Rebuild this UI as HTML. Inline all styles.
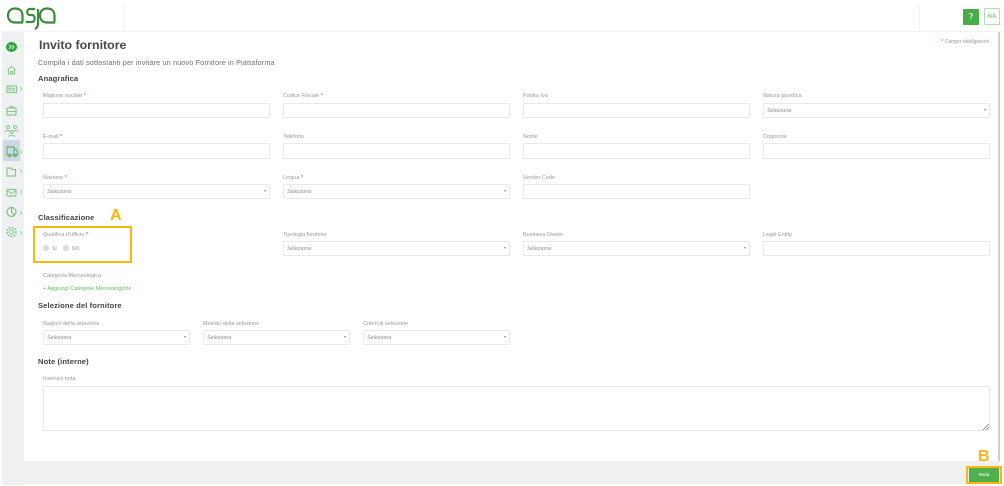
<!DOCTYPE html>
<html lang="it"><head><meta charset="utf-8"><title>Invito fornitore</title>
<style>
html,body{margin:0;padding:0;background:#fff}
#p{position:relative;width:1004px;height:486px;overflow:hidden;background:#fff;font-family:"Liberation Sans",sans-serif;color:#777}
#p>*{position:absolute}
.l{font-size:5.5px;line-height:8px;color:#999;white-space:nowrap;filter:blur(.3px);margin-top:1px}
.l b{color:#e8344e;font-weight:400}
.i{box-sizing:border-box;border:1px solid #e8eaea;background:#fff;border-radius:1px;height:15px}
.s{box-sizing:border-box;border:1px solid #e8eaea;background:#fff;border-radius:1px;height:15px;font-size:5.5px;font-style:italic;color:#8f8f8f;line-height:15px;padding-left:3px}
.s:after{content:"";position:absolute;right:3px;top:5px;border:1.5px solid transparent;border-top:2px solid #888;border-bottom:0}
.h{font-size:7.600px;font-weight:700;color:#444;line-height:10px;white-space:nowrap;letter-spacing:.1px;filter:blur(.25px);margin-top:1px}
.o{border:2px solid #fbb70f;box-sizing:border-box}
.y{color:#fbb70f;font-weight:700;font-size:16px;line-height:16px}
svg{overflow:visible}
</style></head><body><div id="p">
<svg style="left:0;top:0" width="60" height="32" viewBox="0 0 60 32" fill="none" stroke="#3b8b3a" stroke-width="2.200">
<path d="M23 22.500H15C10.500 22.500 8 19.500 8 15.500S10.500 8.500 15 8.500C19.500 8.500 22.500 11 22.500 15.500V22"/>
<path d="M35 9H29.500C26.500 9 26.500 15 29.500 15H32C35.500 15 35.500 22 32 22H26"/>
<path d="M38 9V23.500C38 26.500 37 28 35 29"/>
<path d="M55 22.500H47C42.500 22.500 40 19.500 40 15.500S42.500 8.500 47 8.500C51.500 8.500 54.500 11 54.500 15.500V22"/>
</svg>
<div style="left:123px;top:5px;width:1px;height:26px;background:#f4f4f4"></div>
<div style="left:919px;top:5px;width:1px;height:26px;background:#f4f4f4"></div>
<div style="left:0;top:31px;width:1004px;height:1px;background:#f2f2f2"></div>
<div style="left:963px;top:9px;width:16px;height:16px;background:#47ad45;border-radius:1px;color:#dff3df;font-size:8px;font-weight:700;line-height:16px;text-align:center">?</div>
<div style="left:984px;top:8px;box-sizing:border-box;width:16px;height:17px;border:1px solid #b3e0b3;border-radius:1px;color:#8fcb8f;font-size:6px;font-weight:700;line-height:17px;text-align:center">NA</div>

<div style="left:2px;top:32px;width:22px;height:453px;background:#edf1f2"></div>
<div style="left:3px;top:140px;width:17px;height:21px;background:#ccd9e4;border-radius:2px"></div>
<svg style="left:0;top:32px" width="26" height="215" viewBox="0 0 26 215" fill="none" stroke="#8cc88c" stroke-width="1">
<ellipse cx="11.500" cy="15" rx="5.500" ry="5" fill="#2fa53a" stroke="none"/>
<path d="M9 13l2 2-2 2M12 13l2 2-2 2" stroke="#dff3df"/>
<path d="M7.500 38l4-3.500 4 3.500M8.500 37v5h6v-5M10.500 42v-2.500h2V42"/>
<rect x="7" y="54" width="9.500" height="6.500" stroke-width="1.200"/><path d="M9 56h2v2H9zM12.500 56.500h2.500M12.500 58.500h2.500"/>
<rect x="7" y="76" width="9" height="7" rx="1" stroke-width="1.200"/><path d="M7 79.500h9M10 76v-1.500h3V76"/>
<circle cx="8" cy="95" r="1.500"/><circle cx="15" cy="95" r="1.500"/><circle cx="11.500" cy="100" r="1.500"/><path d="M5.500 100c0-2 4-2 4 0M13.500 100c0-2 4-2 4 0M8.500 105c0-2.500 6-2.500 6 0"/>
<path d="M7 115h7v8H7zM14 117.500h2.500l1 2.500v3H14" stroke="#6db56d" stroke-width="1.200"/><circle cx="9.500" cy="123.500" r="1.200" stroke="#6db56d"/><circle cx="15" cy="123.500" r="1.200" stroke="#6db56d"/>
<path d="M7 136h4l1 1.500h3.500v6.500H7z" stroke-width="1.200"/>
<rect x="7" y="157.500" width="9" height="6.500" rx="1" stroke-width="1.200"/><path d="M7 158.500l4.500 3 4.500-3"/>
<circle cx="11.500" cy="180" r="4.500" stroke-width="1.400"/><path d="M11.500 175.500V180l3 3" stroke="#6db56d"/>
<circle cx="11.500" cy="200" r="2"/><circle cx="11.500" cy="200" r="4.500" stroke-width="1.500" stroke-dasharray="2 1"/>
<g stroke="#b5bcbc" stroke-width=".8"><path d="M20 55l2 2-2 2M20 118l2 2-2 2M20 137l2 2-2 2M20 158l2 2-2 2M20 179l2 2-2 2M20 199l2 2-2 2"/></g>
</svg>

<div style="left:39px;top:38px;font-size:12.400px;line-height:15px;font-weight:700;color:#4a4a4a;white-space:nowrap;filter:blur(.3px)">Invito fornitore</div>
<div style="left:38px;top:58px;font-size:7.300px;line-height:9px;color:#707070;white-space:nowrap;letter-spacing:.12px;filter:blur(.25px)">Compila i dati sottostanti per invitare un nuovo Fornitore in Piattaforma</div>
<div class="l" style="left:941px;top:37px;font-size:5.200px;font-style:italic"><b>*</b> Campo obbligatorio</div>

<div class="h" style="left:38px;top:73px">Anagrafica</div>
<div class="l" style="left:43px;top:91px">Ragione sociale <b>*</b></div><div class="i" style="left:43px;top:103px;width:227px"></div>
<div class="l" style="left:283px;top:91px">Codice Fiscale <b>*</b></div><div class="i" style="left:283px;top:103px;width:227px"></div>
<div class="l" style="left:523px;top:91px">Partita Iva</div><div class="i" style="left:523px;top:103px;width:227px"></div>
<div class="l" style="left:763px;top:91px">Natura giuridica</div><div class="s" style="left:763px;top:103px;width:227px">Seleziona</div>

<div class="l" style="left:43px;top:132px">E-mail <b>*</b></div><div class="i" style="left:43px;top:143px;width:227px;height:16px"></div>
<div class="l" style="left:283px;top:132px">Telefono</div><div class="i" style="left:283px;top:143px;width:227px;height:16px"></div>
<div class="l" style="left:523px;top:132px">Nome</div><div class="i" style="left:523px;top:143px;width:227px;height:16px"></div>
<div class="l" style="left:763px;top:132px">Cognome</div><div class="i" style="left:763px;top:143px;width:227px;height:16px"></div>

<div class="l" style="left:43px;top:173px">Nazione <b>*</b></div><div class="s" style="left:43px;top:184px;width:227px">Seleziona</div>
<div class="l" style="left:283px;top:173px">Lingua <b>*</b></div><div class="s" style="left:283px;top:184px;width:227px">Seleziona</div>
<div class="l" style="left:523px;top:173px">Vendor Code</div><div class="i" style="left:523px;top:184px;width:227px"></div>

<div class="h" style="left:38px;top:212px">Classificazione</div>
<div class="y" style="left:110px;top:208px">A</div>
<div class="o" style="left:33px;top:226px;width:99px;height:37px"></div>
<div class="l" style="left:43px;top:230px">Qualifica d'ufficio <b>*</b></div>
<div style="left:43px;top:245px;width:6px;height:6px;border-radius:50%;background:#dcdcdc"></div>
<div class="l" style="left:52px;top:244px;font-size:5px">SI</div>
<div style="left:63px;top:245px;width:6px;height:6px;border-radius:50%;background:#dcdcdc"></div>
<div class="l" style="left:72px;top:244px;font-size:5px">NO</div>
<div class="l" style="left:283px;top:230px">Tipologia fornitore</div><div class="s" style="left:283px;top:241px;width:227px">Seleziona</div>
<div class="l" style="left:523px;top:230px">Business Owner</div><div class="s" style="left:523px;top:241px;width:227px">Seleziona</div>
<div class="l" style="left:763px;top:230px">Legal Entity</div><div class="i" style="left:763px;top:241px;width:227px"></div>

<div class="l" style="left:43px;top:271px">Categoria Merceologica</div>
<div class="l" style="left:43px;top:284px;color:#62bd62;font-size:5.500px">+ Aggiungi Categorie Merceologiche</div>

<div class="h" style="left:38px;top:300px">Selezione del fornitore</div>
<div class="l" style="left:43px;top:319px">Ragioni della selezione</div><div class="s" style="left:43px;top:330px;width:147px">Seleziona</div>
<div class="l" style="left:203px;top:319px">Metodo della selezione</div><div class="s" style="left:203px;top:330px;width:147px">Seleziona</div>
<div class="l" style="left:363px;top:319px">Criteri di selezione</div><div class="s" style="left:363px;top:330px;width:147px">Seleziona</div>

<div class="h" style="left:38px;top:356px">Note (interne)</div>
<div class="l" style="left:43px;top:374px">Inserisci nota</div>
<div class="i" style="left:43px;top:386px;width:947px;height:45px"></div>
<svg style="left:983px;top:424px" width="6" height="6" viewBox="0 0 6 6" stroke="#666" stroke-width=".7"><path d="M0 6L6 0M3 6L6 3"/></svg>

<div style="left:998px;top:32px;width:2px;height:429px;background:#cfcfcf"></div>
<div style="left:24px;top:461px;width:976px;height:23px;background:#f0f0f0"></div>
<div style="left:969px;top:468px;width:30px;height:14px;background:#4fb04d;color:#e3f4e3;font-size:4.800px;font-weight:700;line-height:16px;text-align:center">Invia</div>
<div class="o" style="left:966px;top:466px;width:36px;height:18px"></div>
<div class="y" style="left:978px;top:449px">B</div>
</div></body></html>
